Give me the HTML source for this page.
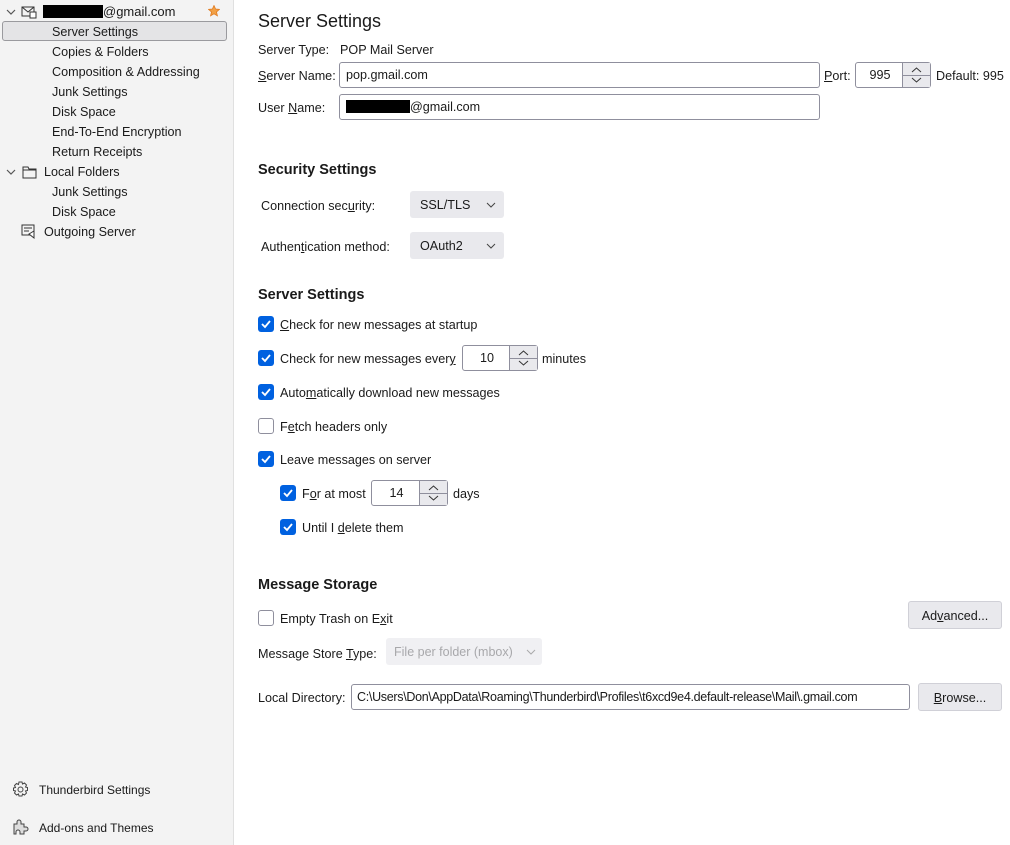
<!DOCTYPE html>
<html><head><meta charset="utf-8"><style>
*{box-sizing:border-box;margin:0;padding:0}
body{width:1010px;height:845px;position:relative;font-family:"Liberation Sans",sans-serif;font-size:12.6px;color:#1a1a1a;background:#fff;overflow:hidden}
.a{position:absolute;white-space:nowrap;line-height:16px}
#side{position:absolute;left:0;top:0;width:234px;height:845px;background:#f3f3f3;border-right:1px solid #e0e0e0}
#side .a{margin-top:1px}
.inp{position:absolute;border:1px solid #8f8f9d;border-radius:3px;background:#fff;height:26px;line-height:25px;padding-left:6px}
.sel{position:absolute;background:#e9e9ed;border-radius:3px;height:27px;line-height:28px;padding-left:10px}
.sel svg{position:absolute;right:8px;top:10px}
.btn{position:absolute;background:#e9e9ed;border:1px solid #d0d0d7;border-radius:3px;text-align:center;height:28px;line-height:28px}
.cb{position:absolute;width:16px;height:16px;border-radius:3px;background:#0061e0}
.cb.off{background:#fff;border:1px solid #8f8f9d}
.cb svg{position:absolute;left:2px;top:2px}
.h{position:absolute;font-weight:bold;font-size:14.5px;margin-top:2px}
.spin{position:absolute;border:1px solid #8f8f9d;border-radius:3px;background:#fff;height:26px}
.spin .v{position:absolute;left:0;top:0;height:24px;line-height:25px;text-align:center}
.spin .b{position:absolute;right:0;top:0;width:28px;height:24px;background:#e9e9ed;border-left:1px solid #8f8f9d}
.spin .b:after{content:"";position:absolute;left:0;right:0;top:12px;border-top:1px solid #8f8f9d}
u{text-decoration:underline}
.m{margin-top:1px}
</style></head><body>
<div id="side">
<svg class="a" style="left:6px;top:6px" width="10" height="10"><path d="M1 3l4 4 4-4" fill="none" stroke="#555" stroke-width="1.2"/></svg>
<svg class="a" style="left:21px;top:4px" width="16" height="14"><rect x="1" y="2" width="12" height="9" fill="none" stroke="#333"/><path d="M1 2l6 5 6-5" fill="none" stroke="#333"/><rect x="9" y="7" width="6" height="6" fill="#fff" stroke="#333"/></svg>
<div class="a" style="left:43px;top:4px;width:60px;height:13px;background:#000"></div>
<div class="a" style="left:103px;top:3px;font-size:13px">@gmail.com</div>
<svg class="a" style="left:208px;top:4px" width="12" height="12"><path d="M6 0.5l1.6 3.5 3.8.4-2.9 2.6.9 3.8L6 8.8 2.6 10.8l.9-3.8L.6 4.4l3.8-.4z" fill="#f2a146" stroke="#e07a1f" stroke-width=".8"/></svg>
<div class="a" style="left:2px;top:21px;width:225px;height:20px;background:#e4e4e6;border:1px solid #9a9a9e;border-radius:3px;margin-top:0"></div>
<div class="a" style="left:52px;top:23px">Server Settings</div>
<div class="a" style="left:52px;top:43px">Copies &amp; Folders</div>
<div class="a" style="left:52px;top:63px">Composition &amp; Addressing</div>
<div class="a" style="left:52px;top:83px">Junk Settings</div>
<div class="a" style="left:52px;top:103px">Disk Space</div>
<div class="a" style="left:52px;top:123px">End-To-End Encryption</div>
<div class="a" style="left:52px;top:143px">Return Receipts</div>
<svg class="a" style="left:6px;top:166px" width="10" height="10"><path d="M1 3l4 4 4-4" fill="none" stroke="#555" stroke-width="1.2"/></svg>
<svg class="a" style="left:22px;top:164px" width="16" height="14"><path d="M1 2h5l1 2h7v9H1z" fill="none" stroke="#333"/><path d="M1 5h13" stroke="#333"/></svg>
<div class="a" style="left:44px;top:163px">Local Folders</div>
<div class="a" style="left:52px;top:183px">Junk Settings</div>
<div class="a" style="left:52px;top:203px">Disk Space</div>
<svg class="a" style="left:21px;top:223px" width="16" height="16"><rect x="1" y="1" width="12" height="10" fill="none" stroke="#333"/><path d="M3 4h8M3 7h5" stroke="#333"/><path d="M8 10l5-3v7z" fill="#fff" stroke="#333"/></svg>
<div class="a" style="left:44px;top:223px">Outgoing Server</div>
<svg class="a" style="left:12px;top:780px" width="17" height="17"><circle cx="8.5" cy="8.5" r="2.5" fill="none" stroke="#444"/><path d="M7 1h3l.5 2 2-1 2 2-1 2 2 .5v3l-2 .5 1 2-2 2-2-1-.5 2H7l-.5-2-2 1-2-2 1-2-2-.5V7l2-.5-1-2 2-2 2 1z" fill="none" stroke="#444"/></svg>
<div class="a" style="left:39px;top:781px;font-size:12px">Thunderbird Settings</div>
<svg class="a" style="left:12px;top:817px" width="18" height="18"><path d="M2 6h3V4a2 2 0 014 0v2h3v3h2a2 2 0 010 4h-2v3H8v-2a2 2 0 00-4 0v2H2z" fill="#ddd" stroke="#444"/></svg>
<div class="a" style="left:39px;top:819px;font-size:12px">Add-ons and Themes</div>
</div>

<div class="a" style="left:258px;top:10px;font-size:18px;line-height:22px">Server Settings</div>
<div class="a m" style="left:258px;top:41px">Server Type:</div>
<div class="a m" style="left:340px;top:41px">POP Mail Server</div>
<div class="a m" style="left:258px;top:67px"><u>S</u>erver Name:</div>
<div class="inp" style="left:339px;top:62px;width:481px">pop.gmail.com</div>
<div class="a m" style="left:824px;top:67px"><u>P</u>ort:</div>
<div class="spin" style="left:855px;top:62px;width:76px"><div class="v" style="width:48px">995</div><div class="b"><svg width="27" height="24"><path d="M9 9l4.5-4 4.5 4M9 15l4.5 4 4.5-4" fill="none" stroke="#333"/></svg></div></div>
<div class="a m" style="left:936px;top:67px">Default: 995</div>
<div class="a m" style="left:258px;top:99px">User <u>N</u>ame:</div>
<div class="inp" style="left:339px;top:94px;width:481px"><span style="display:inline-block;width:64px;height:13px;background:#000;vertical-align:-2px"></span>@gmail.com</div>

<div class="h" style="left:258px;top:160px">Security Settings</div>
<div class="a m" style="left:261px;top:197px">Connection sec<u>u</u>rity:</div>
<div class="sel" style="left:410px;top:191px;width:94px">SSL/TLS<svg width="10" height="8"><path d="M1 2l4 4 4-4" fill="none" stroke="#444"/></svg></div>
<div class="a m" style="left:261px;top:238px">Authen<u>t</u>ication method:</div>
<div class="sel" style="left:410px;top:232px;width:94px">OAuth2<svg width="10" height="8"><path d="M1 2l4 4 4-4" fill="none" stroke="#444"/></svg></div>

<div class="h" style="left:258px;top:285px">Server Settings</div>
<div class="cb" style="left:258px;top:316px"><svg width="12" height="12"><path d="M2 6l3 3 5-6" fill="none" stroke="#fff" stroke-width="1.8"/></svg></div>
<div class="a m" style="left:280px;top:316px"><u>C</u>heck for new messages at startup</div>
<div class="cb" style="left:258px;top:350px"><svg width="12" height="12"><path d="M2 6l3 3 5-6" fill="none" stroke="#fff" stroke-width="1.8"/></svg></div>
<div class="a m" style="left:280px;top:350px">Check for new messages ever<u>y</u></div>
<div class="spin" style="left:462px;top:345px;width:76px"><div class="v" style="width:48px">10</div><div class="b"><svg width="27" height="24"><path d="M9 9l4.5-4 4.5 4M9 15l4.5 4 4.5-4" fill="none" stroke="#333"/></svg></div></div>
<div class="a m" style="left:542px;top:350px">minutes</div>
<div class="cb" style="left:258px;top:384px"><svg width="12" height="12"><path d="M2 6l3 3 5-6" fill="none" stroke="#fff" stroke-width="1.8"/></svg></div>
<div class="a m" style="left:280px;top:384px">Auto<u>m</u>atically download new messages</div>
<div class="cb off" style="left:258px;top:418px"></div>
<div class="a m" style="left:280px;top:418px">F<u>e</u>tch headers only</div>
<div class="cb" style="left:258px;top:451px"><svg width="12" height="12"><path d="M2 6l3 3 5-6" fill="none" stroke="#fff" stroke-width="1.8"/></svg></div>
<div class="a m" style="left:280px;top:451px">Leave messages on server</div>
<div class="cb" style="left:280px;top:485px"><svg width="12" height="12"><path d="M2 6l3 3 5-6" fill="none" stroke="#fff" stroke-width="1.8"/></svg></div>
<div class="a m" style="left:302px;top:485px">F<u>o</u>r at most</div>
<div class="spin" style="left:371px;top:480px;width:77px"><div class="v" style="width:49px">14</div><div class="b"><svg width="27" height="24"><path d="M9 9l4.5-4 4.5 4M9 15l4.5 4 4.5-4" fill="none" stroke="#333"/></svg></div></div>
<div class="a m" style="left:453px;top:485px">days</div>
<div class="cb" style="left:280px;top:519px"><svg width="12" height="12"><path d="M2 6l3 3 5-6" fill="none" stroke="#fff" stroke-width="1.8"/></svg></div>
<div class="a m" style="left:302px;top:519px">Until I <u>d</u>elete them</div>

<div class="h" style="left:258px;top:575px">Message Storage</div>
<div class="cb off" style="left:258px;top:610px"></div>
<div class="a m" style="left:280px;top:610px">Empty Trash on E<u>x</u>it</div>
<div class="btn" style="left:908px;top:601px;width:94px">Ad<u>v</u>anced...</div>
<div class="a m" style="left:258px;top:645px">Message Store <u>T</u>ype:</div>
<div class="sel" style="left:386px;top:638px;width:156px;background:#f0f0f3;color:#a8a8ab;padding-left:8px;font-size:12.5px">File per folder (mbox)<svg width="10" height="8" style="right:6px"><path d="M1 2l4 4 4-4" fill="none" stroke="#aaa"/></svg></div>
<div class="a m" style="left:258px;top:689px">Local Directory:</div>
<div class="inp" style="left:351px;top:684px;width:559px;overflow:hidden;font-size:12.5px;letter-spacing:-0.3px;padding-left:5px">C:\Users\Don\AppData\Roaming\Thunderbird\Profiles\t6xcd9e4.default-release\Mail\.gmail.com</div>
<div class="btn" style="left:918px;top:683px;width:84px"><u>B</u>rowse...</div>
</body></html>
